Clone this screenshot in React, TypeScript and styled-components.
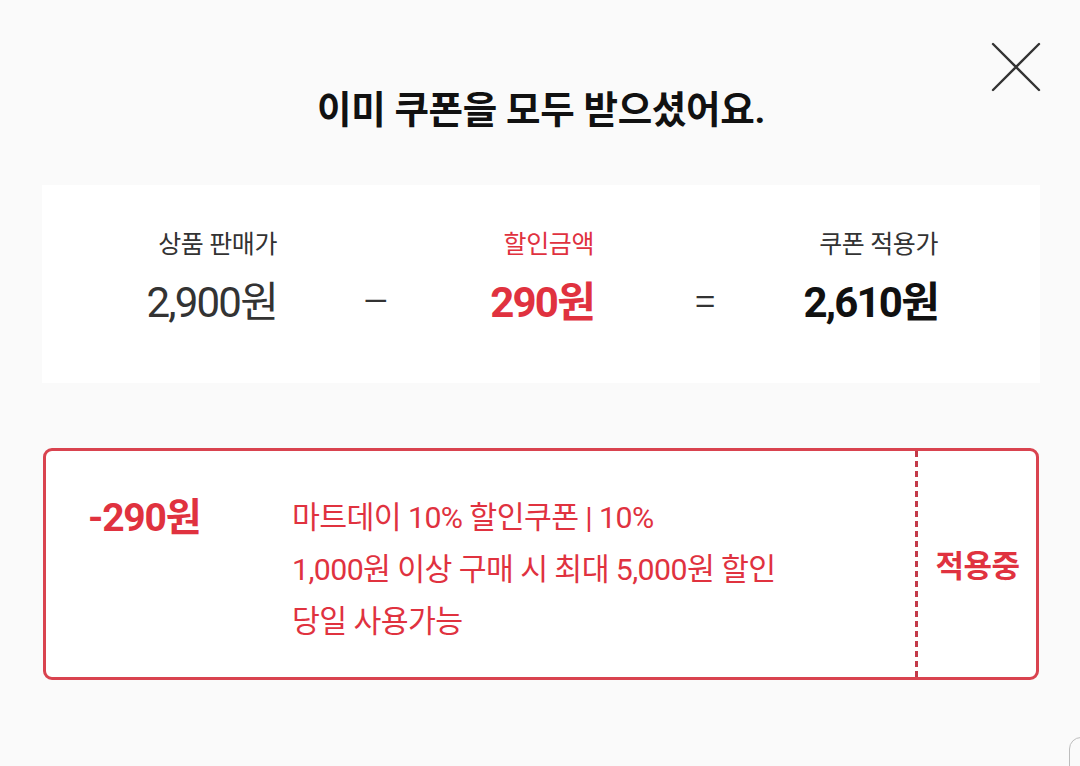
import React from 'react'
import styled, { createGlobalStyle } from 'styled-components'

const RED = '#e0323f'

const GlobalStyle = createGlobalStyle`
    html, body {
        margin: 0;
        padding: 0;
        background: #fafafa;
    }
    body {
        font-family: Roboto, "Noto Sans CJK KR", "Noto Sans", sans-serif;
        color: #222;
    }
`

const Page = styled.div`
    position: relative;
    width: 1080px;
    height: 766px;
    overflow: hidden;
    padding: 0 40px 0 42px;
    box-sizing: border-box;
    display: flex;
    flex-direction: column;
`

const CloseButton = styled.button`
    position: absolute;
    top: 41px;
    right: 38px;
    width: 52px;
    height: 52px;
    padding: 0;
    border: none;
    background: transparent;
    cursor: pointer;
`

const Title = styled.h1`
    margin: 86px 0 0;
    height: 48px;
    line-height: 48px;
    text-align: center;
    font-size: 37.5px;
    font-weight: 700;
    color: #111;
    letter-spacing: -0.3px;
`

const Summary = styled.div`
    margin-top: 51px;
    height: 198px;
    box-sizing: border-box;
    padding-top: 45px;
    background: #fff;
    display: grid;
    grid-template-columns: 235px 198px 119px 222px 122px;
    align-items: start;
`

const PriceColumn = styled.div`
    display: flex;
    flex-direction: column;
    align-items: flex-end;
    white-space: nowrap;
`

const PriceLabel = styled.div<{ red?: boolean }>`
    font-size: 25px;
    line-height: 30px;
    color: ${({ red }) => (red ? RED : '#333')};
    letter-spacing: -0.4px;
`

const PriceValue = styled.div<{ tone: 'plain' | 'red' | 'strong' }>`
    margin-top: 20px;
    font-size: 42px;
    line-height: 46px;
    letter-spacing: -1.8px;
    font-weight: ${({ tone }) => (tone === 'plain' ? 400 : 700)};
    color: ${({ tone }) => (tone === 'red' ? RED : tone === 'strong' ? '#111' : '#333')};
`

const Operator = styled.div`
    padding-top: 49px;
    text-align: center;
    font-size: 42px;
    font-weight: 300;
    line-height: 46px;
    color: #333;
`

const Coupon = styled.div`
    margin-top: 65px;
    height: 232px;
    box-sizing: border-box;
    margin-left: 1px;
    margin-right: 1px;
    border: 3px solid #d9434f;
    border-radius: 9px;
    background: #fff;
    display: flex;
`

const CouponBody = styled.div`
    flex: 1;
    display: flex;
    padding: 43px 0 0 42px;
`

const CouponAmount = styled.div`
    width: 204px;
    font-size: 39px;
    line-height: 48px;
    font-weight: 700;
    color: ${RED};
    letter-spacing: -1.2px;
`

const CouponInfo = styled.div`
    font-size: 30.3px;
    line-height: 52px;
    color: ${RED};
    letter-spacing: -0.6px;
    margin-top: -2px;
`

const CouponAction = styled.div`
    position: relative;
    box-sizing: border-box;
    width: 121px;
    display: flex;
    align-items: center;
    justify-content: center;
    font-size: 31px;
    font-weight: 700;
    color: ${RED};
    letter-spacing: -0.5px;
    padding-left: 4px;
    padding-bottom: 2px;

    &::before {
        content: '';
        position: absolute;
        left: 0;
        top: 0;
        bottom: 0;
        width: 3px;
        background-image: linear-gradient(to bottom, #c33a48 0 6px, transparent 6px 10px);
        background-size: 3px 10px;
    }
`

const CornerTab = styled.div`
    position: absolute;
    left: 1069px;
    top: 737px;
    width: 40px;
    height: 60px;
    border: 1px solid #bdbdbd;
    border-radius: 12px;
`

export default function App() {
    return (
        <Page>
            <GlobalStyle />
            <CloseButton aria-label="닫기">
                <svg width="52" height="52" viewBox="0 0 52 52">
                    <path d="M3 3 L49 49 M49 3 L3 49" stroke="#333" strokeWidth="2.4" strokeLinecap="round" />
                </svg>
            </CloseButton>
            <Title>이미 쿠폰을 모두 받으셨어요.</Title>
            <Summary>
                <PriceColumn>
                    <PriceLabel>상품 판매가</PriceLabel>
                    <PriceValue tone="plain">2,900원</PriceValue>
                </PriceColumn>
                <Operator>–</Operator>
                <PriceColumn>
                    <PriceLabel red>할인금액</PriceLabel>
                    <PriceValue tone="red">290원</PriceValue>
                </PriceColumn>
                <Operator>=</Operator>
                <PriceColumn>
                    <PriceLabel>쿠폰 적용가</PriceLabel>
                    <PriceValue tone="strong">2,610원</PriceValue>
                </PriceColumn>
            </Summary>
            <Coupon>
                <CouponBody>
                    <CouponAmount>-290원</CouponAmount>
                    <CouponInfo>
                        <div>마트데이 10% 할인쿠폰 | 10%</div>
                        <div>1,000원 이상 구매 시 최대 5,000원 할인</div>
                        <div>당일 사용가능</div>
                    </CouponInfo>
                </CouponBody>
                <CouponAction>적용중</CouponAction>
            </Coupon>
            <CornerTab />
        </Page>
    )
}
